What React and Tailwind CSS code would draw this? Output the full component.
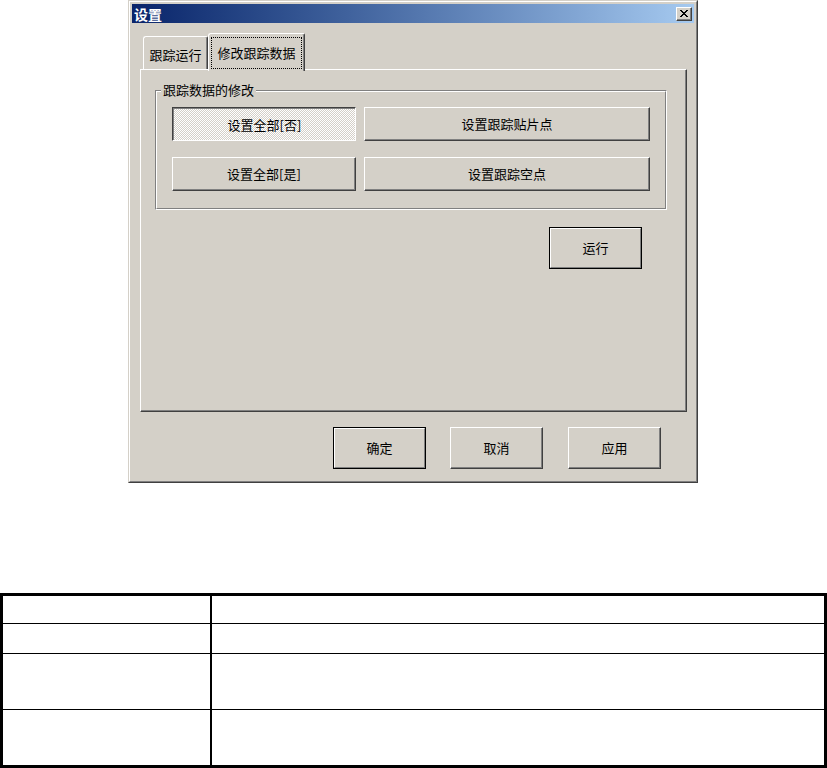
function Btn({ w, h, children, def, pressed }) {
  if (def) {
    return (
      <div className={`${w} ${h} border border-black`}>
        <div className="h-full w-full border border-t-white border-l-white border-b-[#808080] border-r-[#808080] flex items-center justify-center text-[13px] leading-[16px]">
          {children}
        </div>
      </div>
    );
  }
  if (pressed) {
    return (
      <div
        className={`${w} ${h} border border-t-[#404040] border-l-[#404040] border-b-white border-r-white shadow-[inset_1px_1px_0_#808080] bg-[image:repeating-conic-gradient(#ffffff_0_25%,#d4d0c8_0_50%)] bg-[length:2px_2px] flex items-center justify-center text-[13px] leading-[16px] pt-[1px] pl-[1px]`}
      >
        {children}
      </div>
    );
  }
  return (
    <div
      className={`${w} ${h} border border-t-white border-l-white border-b-[#404040] border-r-[#404040] shadow-[inset_-1px_-1px_0_#808080] flex items-center justify-center text-[13px] leading-[16px]`}
    >
      {children}
    </div>
  );
}

function Dialog() {
  return (
    <div className="ml-[128px] w-[570px] h-[483px] border border-t-[#d4d0c8] border-l-[#d4d0c8] border-b-[#404040] border-r-[#404040]">
      <div className="h-full border border-t-white border-l-white border-b-[#808080] border-r-[#808080] bg-[#d4d0c8] px-[2px] pt-[2px] flex flex-col">
        {/* Title bar */}
        <div className="h-[19px] bg-linear-to-r from-[#0a246a] to-[#a6caf0] flex items-center justify-between pl-[2px] pr-[2px]">
          <span className="text-white font-bold text-[14px] leading-[16px]">设置</span>
          <div className="w-[16px] h-[14px] bg-[#d4d0c8] border border-t-white border-l-white border-b-[#404040] border-r-[#404040] shadow-[inset_-1px_-1px_0_#808080] flex items-center justify-center pr-[1px] pb-[1px]">
            <svg width="8" height="7" viewBox="0 0 8 7" shapeRendering="crispEdges">
              <path d="M0 0h2v1h-2z M6 0h2v1h-2z M1 1h2v1h-2z M5 1h2v1h-2z M2 2h4v1h-4z M3 3h2v1h-2z M2 4h4v1h-4z M1 5h2v1h-2z M5 5h2v1h-2z M0 6h2v1h-2z M6 6h2v1h-2z" fill="#000" />
            </svg>
          </div>
        </div>

        {/* Body */}
        <div className="pl-[8px] pt-[10px] flex flex-col">
          {/* Tabs */}
          <div className="flex items-end h-[36px]">
            <div className="ml-[3px] w-[65px] h-[33px] border-t border-l border-t-white border-l-white border-r border-r-[#404040] shadow-[inset_-1px_0_0_#808080] rounded-tl-[3px] rounded-tr-[2px] flex items-center justify-center text-[13px] leading-[16px] pt-[3px]">
              跟踪运行
            </div>
            <div className="relative z-10 -mb-[2px] w-[97px] h-[38px] bg-[#d4d0c8] border-t border-l border-t-white border-l-white border-r border-r-[#404040] shadow-[inset_-1px_0_0_#808080] rounded-tl-[3px] rounded-tr-[2px] px-[2px] pt-[3px] pb-[2px] flex">
              <div className="flex-1 border border-dotted border-black flex items-center justify-center text-[13px] leading-[16px]">
                修改跟踪数据
              </div>
            </div>
          </div>

          {/* Panel */}
          <div className="w-[547px] h-[343px] border border-t-white border-l-white border-b-[#404040] border-r-[#404040] shadow-[inset_-1px_-1px_0_#808080] pl-[14px] pt-[20px] flex flex-col">
            <div className="relative w-[512px] h-[120px] border border-t-[#808080] border-l-[#808080] border-b-white border-r-white">
              <div className="h-full border border-t-white border-l-white border-b-[#808080] border-r-[#808080] p-[15px] flex flex-col gap-[16px]">
                <div className="flex gap-[8px]">
                  <Btn w="w-[184px]" h="h-[34px]" pressed>设置全部[否]</Btn>
                  <Btn w="w-[286px]" h="h-[34px]">设置跟踪贴片点</Btn>
                </div>
                <div className="flex gap-[8px]">
                  <Btn w="w-[184px]" h="h-[34px]">设置全部[是]</Btn>
                  <Btn w="w-[286px]" h="h-[34px]">设置跟踪空点</Btn>
                </div>
              </div>
              <span className="absolute left-[5px] top-[-9px] px-[2px] bg-[#d4d0c8] text-[13px] leading-[16px]">
                跟踪数据的修改
              </span>
            </div>
            <div className="mt-[17px] flex justify-end pr-[44px]">
              <Btn w="w-[93px]" h="h-[42px]" def>运行</Btn>
            </div>
          </div>

          {/* Bottom buttons */}
          <div className="mt-[15px] flex justify-end pr-[33px]">
            <Btn w="w-[93px]" h="h-[42px]" def>确定</Btn>
            <div className="ml-[24px]">
              <Btn w="w-[93px]" h="h-[42px]">取消</Btn>
            </div>
            <div className="ml-[25px]">
              <Btn w="w-[93px]" h="h-[42px]">应用</Btn>
            </div>
          </div>
        </div>
      </div>
    </div>
  );
}

function Table() {
  const rows = ["h-[27px]", "h-[30px] border-t border-black", "h-[56px] border-t border-black", "h-[56px] border-t border-black"];
  return (
    <div className="mt-[110px] w-[827px] border-[3px] border-black">
      {rows.map((r, i) => (
        <div key={i} className={`flex ${r}`}>
          <div className="w-[209px] h-full border-r-2 border-black" />
          <div className="flex-1 h-full" />
        </div>
      ))}
    </div>
  );
}

export default function App() {
  return (
    <div className="w-[827px] min-h-[768px] bg-white text-black font-['Noto_Sans_CJK_SC','Noto_Sans',sans-serif]">
      <Dialog />
      <Table />
    </div>
  );
}
